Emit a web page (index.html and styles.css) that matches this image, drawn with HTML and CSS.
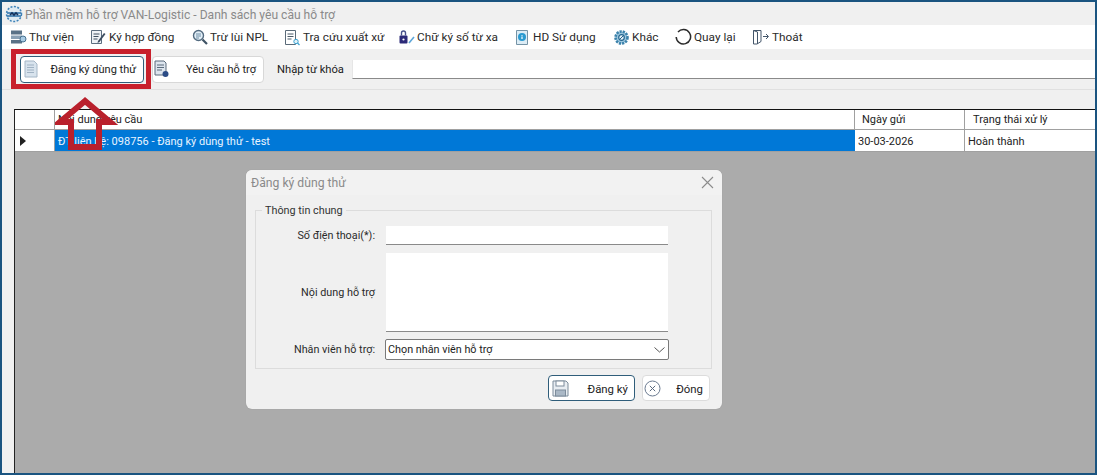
FILE: index.html
```html
<!DOCTYPE html>
<html lang="vi">
<head>
<meta charset="utf-8">
<title>Danh sách yêu cầu hỗ trợ</title>
<link rel="stylesheet" href="styles.css">
</head>
<body>
<div class="window">
  <div class="titlebar">
    <svg class="logo" width="18" height="18" viewBox="0 0 18 18"><circle cx="9" cy="9" r="8" fill="#dfeaf2"/><path d="M2 8h14M2 11h14" stroke="#2c6fa8" stroke-width="1.5"/><circle cx="9" cy="9" r="7.5" fill="none" stroke="#3d82b8" stroke-dasharray="2 1.5" stroke-width="1.5"/><path d="M5 10l2-2 2 2 2-2 2 2" stroke="#12305c" stroke-width="1.6" fill="none"/></svg>
    <span class="title-text">Phần mềm hỗ trợ VAN-Logistic - Danh sách yêu cầu hỗ trợ</span>
  </div>
  <div class="menu">
    <div class="menu-item m1"><svg width="17" height="16" viewBox="0 0 17 16"><rect x="1" y="1.500" width="11" height="4" fill="#5a7186"/><rect x="1" y="6.500" width="11" height="3.500" fill="#8aa0b4"/><rect x="1" y="11" width="11" height="3.500" fill="#5a7186"/><circle cx="13" cy="10" r="3" fill="#a9cbe4" stroke="#47708f"/></svg><span>Thư viện</span></div>
    <div class="menu-item m2"><svg width="18" height="18" viewBox="0 0 18 18"><path d="M2.500 2.500h10v13h-10z" fill="#eef2f6" stroke="#5d6e80"/><path d="M4.500 6h6M4.500 8.500h5M4.500 11h4" stroke="#3e4f60"/><path d="M9 13l6-8 1.500 1-6 8-2 1z" fill="#3c4d60"/></svg><span>Ký hợp đồng</span></div>
    <div class="menu-item m3"><svg width="16" height="16" viewBox="0 0 16 16"><circle cx="6.500" cy="6.500" r="5" fill="#e3eff7" stroke="#536b80" stroke-width="1.400"/><path d="M4 5h5M4 7h5M4 9h3" stroke="#6e8ea6"/><path d="M10.500 10.500l4.500 4.500" stroke="#3f5365" stroke-width="2.200"/></svg><span>Trừ lùi NPL</span></div>
    <div class="menu-item m4"><svg width="17" height="17" viewBox="0 0 17 17"><path d="M1.500 1.500h10v14h-10z" fill="#fff" stroke="#5a6a78"/><path d="M3.500 5h6M3.500 7.500h6M3.500 10h4" stroke="#4a5a68"/><circle cx="12" cy="12.500" r="2.200" fill="#dff1fa" stroke="#3fa3d0"/><path d="M13.500 14l2 2" stroke="#3fa3d0" stroke-width="1.300"/></svg><span>Tra cứu xuất xứ</span></div>
    <div class="menu-item m5"><svg width="17" height="16" viewBox="0 0 17 16"><rect x="1.500" y="6.500" width="8" height="8" rx="1" fill="#2c2a78"/><path d="M3.500 6.500V4a2 2 0 0 1 4 0v2.500" fill="none" stroke="#46508a" stroke-width="1.400"/><circle cx="5.500" cy="10.500" r="1.100" fill="#fff"/><path d="M11 14l5-6" stroke="#5da6d8" stroke-width="1.600"/></svg><span>Chữ ký số từ xa</span></div>
    <div class="menu-item m6"><svg width="14" height="17" viewBox="0 0 14 17"><path d="M1.500 1.500h11v14h-11z" fill="#dcecf5" stroke="#7593a6"/><circle cx="7" cy="8" r="4" fill="#2a9ad0"/><path d="M7 6v.7M7 7.600V10" stroke="#fff" stroke-width="1.200"/></svg><span>HD Sử dụng</span></div>
    <div class="menu-item m7"><svg width="17" height="17" viewBox="0 0 17 17"><circle cx="8.500" cy="8.500" r="6" fill="#9cc6de" stroke="#3b82ab" stroke-width="2.600" stroke-dasharray="2.200 1"/><circle cx="8.500" cy="8.500" r="2.800" fill="#e5f1f8" stroke="#23658e" stroke-width="1.200"/><path d="M6.500 10.500l4-4" stroke="#23658e"/></svg><span>Khác</span></div>
    <div class="menu-item m8"><svg width="18" height="18" viewBox="0 0 18 18"><path d="M4 4A7.200 7.200 0 1 1 2.200 9" fill="none" stroke="#2b2b2b" stroke-width="1.500"/></svg><span>Quay lại</span></div>
    <div class="menu-item m9"><svg width="18" height="16" viewBox="0 0 18 16"><path d="M1.500 1.500h7.500v11l-4 2.500h-3.500z" fill="#fff" stroke="#44566a"/><path d="M1.500 1.500l4 1.500v12" fill="none" stroke="#44566a"/><path d="M11 7.500h5M14 5l2.500 2.500L14 10" fill="none" stroke="#44566a"/></svg><span>Thoát</span></div>
  </div>
  <div class="toolbar">
    <button class="tool-btn btn-reg" type="button">
      <svg width="14" height="18" viewBox="0 0 14 18"><path d="M1 1h9l3 3v13H1z" fill="#d8e3ed" stroke="#a5b6c6"/><path d="M3 5h7M3 7.500h7M3 10h7M3 12.500h7" stroke="#a0b2c3"/></svg>
      <span>Đăng ký dùng thử</span>
    </button>
    <button class="tool-btn btn-help" type="button">
      <svg width="15" height="18" viewBox="0 0 15 18"><path d="M1 1h9l2 2v12H1z" fill="#dde5ee" stroke="#5a6b7c"/><path d="M3 5h7M3 7.500h7M3 10h5" stroke="#5a6b7c"/><circle cx="11.500" cy="14" r="3" fill="#2c4c86"/></svg>
      <span>Yêu cầu hỗ trợ</span>
    </button>
    <label class="kw-label">Nhập từ khóa</label>
    <div class="kw-input"></div>
  </div>
  <div class="strip"></div>
  <div class="grid">
    <div class="row head">
      <div class="cell rh"></div>
      <div class="cell c-content">Nội dung yêu cầu</div>
      <div class="cell c-date">Ngày gửi</div>
      <div class="cell c-status">Trạng thái xử lý</div>
    </div>
    <div class="row data">
      <div class="cell rh"><i class="caret"></i></div>
      <div class="cell c-content sel">ĐT liên hệ: 098756 - Đăng ký dùng thử - test</div>
      <div class="cell c-date">30-03-2026</div>
      <div class="cell c-status">Hoàn thành</div>
    </div>
  </div>
</div>

<div class="dialog">
  <div class="dlg-title">
    <span>Đăng ký dùng thử</span>
    <svg width="13" height="13" viewBox="0 0 13 13"><path d="M1 1l11 11M12 1L1 12" stroke="#8c8c8c" stroke-width="1.100"/></svg>
  </div>
  <fieldset class="group">
    <legend>Thông tin chung</legend>
    <div class="frow r-phone"><label>Số điện thoại(*):</label><div class="field f-phone"></div></div>
    <div class="frow r-text"><label>Nội dung hỗ trợ</label><div class="field f-text"></div></div>
    <div class="frow r-sel"><label>Nhân viên hỗ trợ:</label>
      <div class="select"><span>Chọn nhân viên hỗ trợ</span><svg width="11" height="6" viewBox="0 0 11 6"><path d="M.5.500l5 4.500 5-4.500" fill="none" stroke="#555"/></svg></div>
    </div>
  </fieldset>
  <div class="dlg-actions">
    <button class="dlg-btn b-save" type="button">
      <svg width="17" height="17" viewBox="0 0 17 17"><path d="M1 1h13l2 2v13H1z" fill="#e8edf2" stroke="#7d8c9b"/><rect x="4" y="1" width="8" height="5" fill="#fff" stroke="#7d8c9b"/><rect x="3.500" y="10" width="10" height="6" fill="#aab8c6" stroke="#7d8c9b"/></svg>
      <span>Đăng ký</span>
    </button>
    <button class="dlg-btn b-close" type="button">
      <svg width="17" height="17" viewBox="0 0 17 17"><circle cx="8.500" cy="8.500" r="7.500" fill="#fff" stroke="#6a7a90"/><path d="M5.800 5.800l5.400 5.400M11.200 5.800l-5.400 5.400" stroke="#5a6a80"/></svg>
      <span>Đóng</span>
    </button>
  </div>
</div>

<div class="callout-box"></div>
<svg class="callout-arrow" width="70" height="60" viewBox="0 0 70 60"><path d="M30 5 5 26h11v25h28V26h11z" fill="none" stroke="#b9202c" stroke-width="6" stroke-linejoin="miter"/></svg>
</body>
</html>
```
FILE: styles.css
```css
* { box-sizing: border-box; }
html, body { margin: 0; padding: 0; }
svg { flex: none; }
body {
  width: 1097px;
  height: 475px;
  overflow: hidden;
  position: relative;
  font-family: Roboto, "Noto Sans", "Liberation Sans", sans-serif;
  font-size: 11px;
  color: #222;
}
.window {
  width: 1097px;
  height: 475px;
  border: 2px solid #1a5480;
  background: #f0f0f0;
  display: flex;
  flex-direction: column;
}
.titlebar {
  height: 23px;
  display: flex;
  align-items: center;
  padding-left: 3px;
  gap: 2px;
  color: #8a8a8a;
  font-size: 12.1px;
  flex: none;
}
.title-text { position: relative; top: 1px; white-space: nowrap; }
.logo { flex: none; }
.menu {
  height: 24px;
  background: #fff;
  display: flex;
  align-items: center;
  flex: none;
  padding-left: 8px;
  font-size: 11.8px;
  color: #2a2a2a;
}
.menu-item { display: flex; align-items: center; gap: 2px; white-space: nowrap; }
.m1 { width: 79px; }
.m2 { width: 103px; }
.m3 { width: 92px; }
.m4 { width: 114px; }
.m5 { width: 117px; }
.m6 { width: 98px; gap: 4px; }
.m7 { width: 61px; }
.m8 { width: 78px; gap: 2px; }
.m9 { width: 60px; gap: 2px; }
.toolbar {
  height: 40px;
  display: flex;
  align-items: center;
  flex: none;
  padding-left: 18px;
  position: relative;
}
.tool-btn {
  height: 27px;
  background: #fff;
  border: 1px solid #d8d8d8;
  border-radius: 4px;
  font: inherit;
  color: #222;
  display: flex;
  align-items: center;
  justify-content: space-between;
  padding: 0 7px 0 3px;
  flex: none;
  white-space: nowrap;
}
.btn-reg { width: 124px; border: 1px solid #2f5d7a; }
.btn-help { width: 112px; margin-left: 8px; padding-left: 1px; }
.kw-label { margin-left: 13px; width: 75px; flex: none; white-space: nowrap; font-size: 11.2px; }
.kw-input {
  flex: 1;
  height: 19px;
  background: #fff;
  border-bottom: 1px solid #8a8a8a;
  border-left: 1px solid #e6e6e6;
}
.strip {
  height: 20px;
  flex: none;
  border-top: 1px solid #e0e0e0;
}
.grid {
  flex: 1;
  margin-left: 12px;
  background: #ababab;
  border-top: 1px solid #111;
  border-left: 1px solid #222;
}
.row { display: flex; background: #fff; }
.row.head { height: 20px; border-bottom: 1px solid #a0a0a0; }
.row.data { height: 22px; border-bottom: 1px solid #a0a0a0; }
.cell {
  padding-left: 3px;
  display: flex;
  align-items: center;
  white-space: nowrap;
  border-right: 1px solid #a0a0a0;
  font-size: 11px;
  color: #222;
}
.data .cell { padding-top: 1px; }
.rh { width: 40px; flex: none; padding-left: 5px; }
.c-content { width: 800px; flex: none; }
.c-date { width: 110px; flex: none; }
.c-status { flex: 1; border-right: 0; }
.head .c-date { padding-left: 7px; }
.head .c-status { padding-left: 8px; }
.sel { background: #0078d7; color: #e8f4ff; border-right: 0; }
.caret {
  width: 0;
  height: 0;
  border-left: 6px solid #222;
  border-top: 5px solid transparent;
  border-bottom: 5px solid transparent;
}
.dialog {
  position: absolute;
  left: 246px;
  top: 170px;
  width: 476px;
  height: 239px;
  background: #f0f0f0;
  border-radius: 6px;
  display: flex;
  flex-direction: column;
  box-shadow: 0 0 1px #8c8c8c;
}
.dlg-title {
  height: 25px;
  flex: none;
  display: flex;
  align-items: center;
  justify-content: space-between;
  padding: 0 8px 0 5px;
  font-size: 12.2px;
  color: #8a8a8a;
  background: #f2f2f2;
  border-radius: 6px 6px 0 0;
}
.group {
  margin: 9px 10px 0 9px;
  padding: 0;
  height: 165px;
  border: 1px solid #dcdcdc;
  min-width: 0;
  flex: none;
  display: flex;
  flex-direction: column;
}
.group legend {
  margin-left: 6px;
  padding: 0 3px;
  font-size: 10.8px;
  color: #333;
  line-height: 13px;
}
.frow { display: flex; }
.frow label {
  width: 119px;
  flex: none;
  text-align: right;
  font-size: 10.8px;
  color: #2a2a2a;
  white-space: nowrap;
}
.field {
  background: #fff;
  width: 282px;
  margin-left: 11px;
  border-bottom: 1px solid #8a8a8a;
}
.r-phone { align-items: center; margin-top: 9px; }
.f-phone { height: 19px; }
.r-text { align-items: center; margin-top: 8px; }
.f-text { height: 79px; }
.r-sel { align-items: center; margin-top: 7px; }
.select {
  margin-left: 10px;
  width: 284px;
  height: 21px;
  background: #fff;
  border: 1px solid #7a7a7a;
  border-radius: 2px;
  display: flex;
  align-items: center;
  justify-content: space-between;
  padding: 0 3px 0 2px;
  font-size: 10.8px;
}
.dlg-actions {
  display: flex;
  justify-content: flex-end;
  gap: 7px;
  padding: 6px 12px 0 0;
}
.dlg-btn {
  height: 26px;
  background: #fff;
  border: 1px solid #dcdcdc;
  border-radius: 4px;
  font: inherit;
  font-size: 11.4px;
  display: flex;
  align-items: center;
  justify-content: space-between;
  padding: 1px 6px 0 3px;
  color: #222;
}
.b-save { width: 87px; border-color: #2f5d7a; }
.b-close { width: 68px; padding-left: 1px; }
.callout-box {
  position: absolute;
  left: 11px;
  top: 49px;
  width: 140px;
  height: 40px;
  border: 5px solid #c8202c;
}
.callout-arrow {
  position: absolute;
  left: 55px;
  top: 96px;
}
```
